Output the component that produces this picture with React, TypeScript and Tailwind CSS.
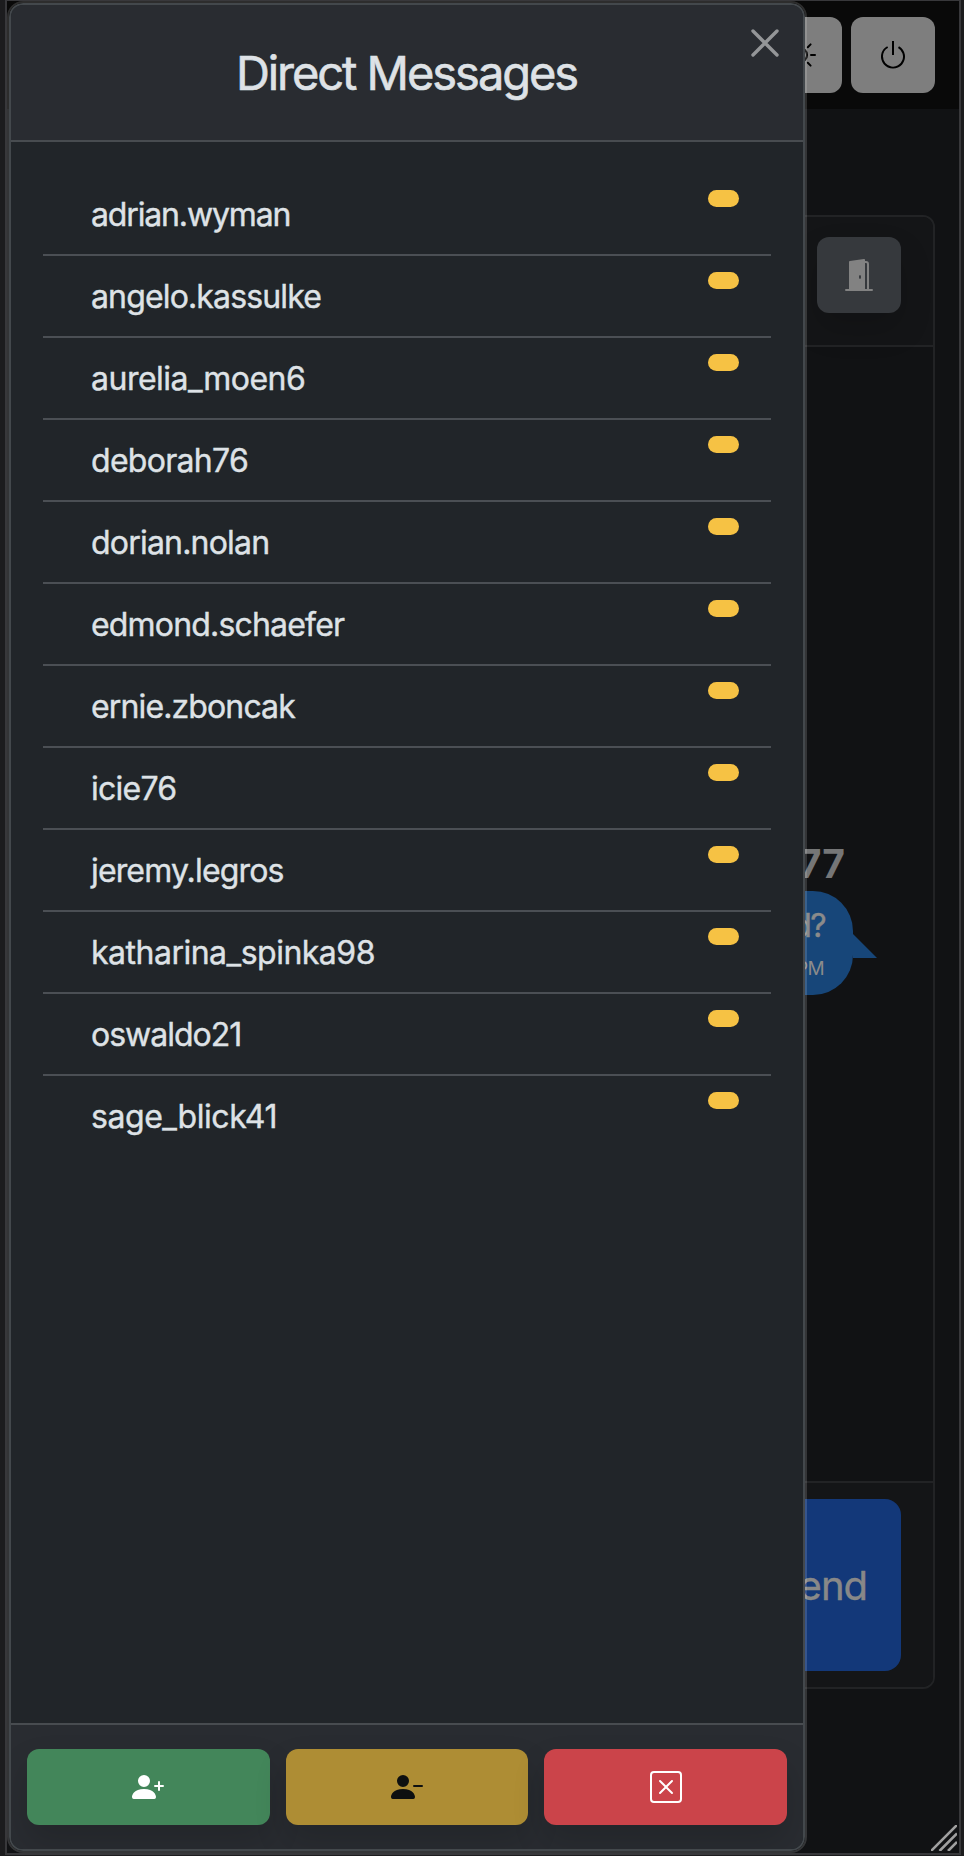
import { BsPersonPlusFill, BsPersonDashFill, BsXSquare, BsPower, BsSun, BsDoorOpenFill } from "react-icons/bs";

const users = [
  { name: "adrian.wyman", tracking: "tracking-[-1.15px]" },
  { name: "angelo.kassulke", tracking: "tracking-[-0.85px]" },
  { name: "aurelia_moen6", tracking: "tracking-[-0.5px]" },
  { name: "deborah76", tracking: "tracking-[-0.7px]" },
  { name: "dorian.nolan", tracking: "tracking-[-0.8px]" },
  { name: "edmond.schaefer", tracking: "tracking-[-0.82px]" },
  { name: "ernie.zboncak", tracking: "tracking-[-0.87px]" },
  { name: "icie76", tracking: "tracking-[-0.75px]" },
  { name: "jeremy.legros", tracking: "tracking-[-0.85px]" },
  { name: "katharina_spinka98", tracking: "tracking-[-0.5px]" },
  { name: "oswaldo21", tracking: "tracking-[-1px]" },
  { name: "sage_blick41", tracking: "tracking-[-0.45px]" },
];

function ChatPage() {
  return (
    <div className="flex h-full flex-col">
      <nav className="flex h-[108px] shrink-0 justify-end gap-[9px] bg-[#090909] pt-4 pr-6">
        <button className="flex h-[76px] w-[84px] items-center justify-center rounded-xl bg-[#7e7e7e] text-black">
          <BsSun size={32} />
        </button>
        <button className="flex h-[76px] w-[84px] items-center justify-center rounded-xl bg-[#7e7e7e] text-black">
          <BsPower size={32} />
        </button>
      </nav>
      <main className="pt-[106px] pr-6 pl-6">
        <section className="flex h-[1474px] flex-col overflow-hidden rounded-xl border-2 border-[#222325]">
          <header className="flex h-[130px] shrink-0 justify-end border-b-2 border-[#222325] bg-[#141517] pt-5 pr-8">
            <button className="flex h-[76px] w-[84px] items-center justify-center rounded-xl bg-[#36393d] text-[#828282] shadow-[0_16px_32px_rgba(0,0,0,0.15)]">
              <BsDoorOpenFill size={32} />
            </button>
          </header>
          <div className="flex grow flex-col items-end pt-[493px] pr-20">
            <h2 className="mr-2 h-[51px] text-[39px] leading-[47px] font-bold text-[#757677]">drew77</h2>
            <div className="relative h-[104px] w-[380px] rounded-[40px] bg-[#174679] pt-[12px] pr-[30px] text-right whitespace-nowrap text-[#8b8b8b]">
              <p className="-mr-[2px] text-[32px] leading-[46px] tracking-[-1.6px] [-webkit-text-stroke:0.4px_#8b8b8b]">How goes the world?</p>
              <p className="-mr-px text-[19px] leading-[39px] tracking-[-0.7px]">3:07 PM</p>
              <svg className="absolute top-[43px] left-full" width="24" height="24" viewBox="0 0 24 24">
                <path d="M0 0L24 24H0Z" fill="#174679" />
              </svg>
            </div>
          </div>
          <footer className="flex h-[206px] shrink-0 justify-end border-t-2 border-[#222325] bg-[#141517] pt-4 pr-8">
            <button className="h-[172px] rounded-2xl bg-[#133879] pt-[2px] pr-[34px] pl-[35px] text-[40px] tracking-[-1px] text-[#888] [-webkit-text-stroke:0.4px_#888]">Send</button>
          </footer>
        </section>
      </main>
    </div>
  );
}

function MessagesDialog() {
  return (
    <div className="flex h-full w-[800px] flex-col overflow-hidden rounded-[16px] border-2 border-white/15 bg-clip-padding">
      <div className="flex h-full flex-col overflow-hidden rounded-[14px] border-2 border-[#43484c] bg-[#212529]">
        <header className="flex h-[137px] shrink-0 border-b-2 border-[#484c50] bg-[#292c31]">
          <div className="w-[51px]" />
          <h1 className="grow pt-[38px] text-center text-[47px] leading-[60px] tracking-[-2.05px] text-[#dee2e6] [-webkit-text-stroke:0.6px_#dee2e6]">Direct Messages</h1>
          <button className="mt-6 mr-6 h-[28px] w-[28px] text-[#949698]" aria-label="Close">
            <svg width="28" height="28" viewBox="0 0 28 28">
              <path d="M2 2L26 26M26 2L2 26" stroke="currentColor" strokeWidth="3.4" strokeLinecap="round" />
            </svg>
          </button>
        </header>
        <ul className="grow px-8 pt-8">
          {users.map((u, i) => (
            <li key={u.name} className={`flex h-[82px] justify-between pr-8 pl-12 text-[32px] leading-[82px] text-[#dee2e6] ${i < users.length - 1 ? "border-b-2 border-[#4b4f54]" : ""}`}>
              <span className={`[-webkit-text-stroke:0.4px_#dee2e6] ${u.tracking}`}>{u.name}</span>
              <span className="mt-4 h-[17px] w-[31px] rounded-full bg-[#f6c244]" />
            </li>
          ))}
        </ul>
        <footer className="flex h-[126px] shrink-0 gap-4 border-t-2 border-[#484c50] bg-[#292c31] px-4 pt-6">
          <button className="flex h-[76px] flex-1 items-center justify-center rounded-xl bg-[#43865a] text-white shadow-[0_16px_32px_rgba(0,0,0,0.15)]">
            <BsPersonPlusFill size={32} />
          </button>
          <button className="flex h-[76px] flex-1 items-center justify-center rounded-xl bg-[#ae8d34] text-[#0e1010] shadow-[0_16px_32px_rgba(0,0,0,0.15)]">
            <BsPersonDashFill size={32} />
          </button>
          <button className="flex h-[76px] flex-1 items-center justify-center rounded-xl bg-[#cb444a] text-white shadow-[0_16px_32px_rgba(0,0,0,0.15)]">
            <BsXSquare size={32} />
          </button>
        </footer>
      </div>
    </div>
  );
}

export default function App() {
  return (
    <div className="h-[1856px] w-[964px] bg-[#1c1c1e] pr-[3px] pl-[5px] font-['Inter',sans-serif]">
      <div className="relative h-[1855px] overflow-hidden border-x-2 border-t border-b-2 border-[#38383b] bg-[#111214]">
        <ChatPage />
        <div className="absolute inset-y-0 left-0">
          <MessagesDialog />
        </div>
        <svg className="absolute right-[2px] bottom-[2px]" width="26" height="26" viewBox="0 0 26 26">
          <path d="M0 26L26 0M8.5 26L26 8.5M17 26L26 17" stroke="#a0a0a0" strokeWidth="2.6" />
        </svg>
      </div>
    </div>
  );
}
